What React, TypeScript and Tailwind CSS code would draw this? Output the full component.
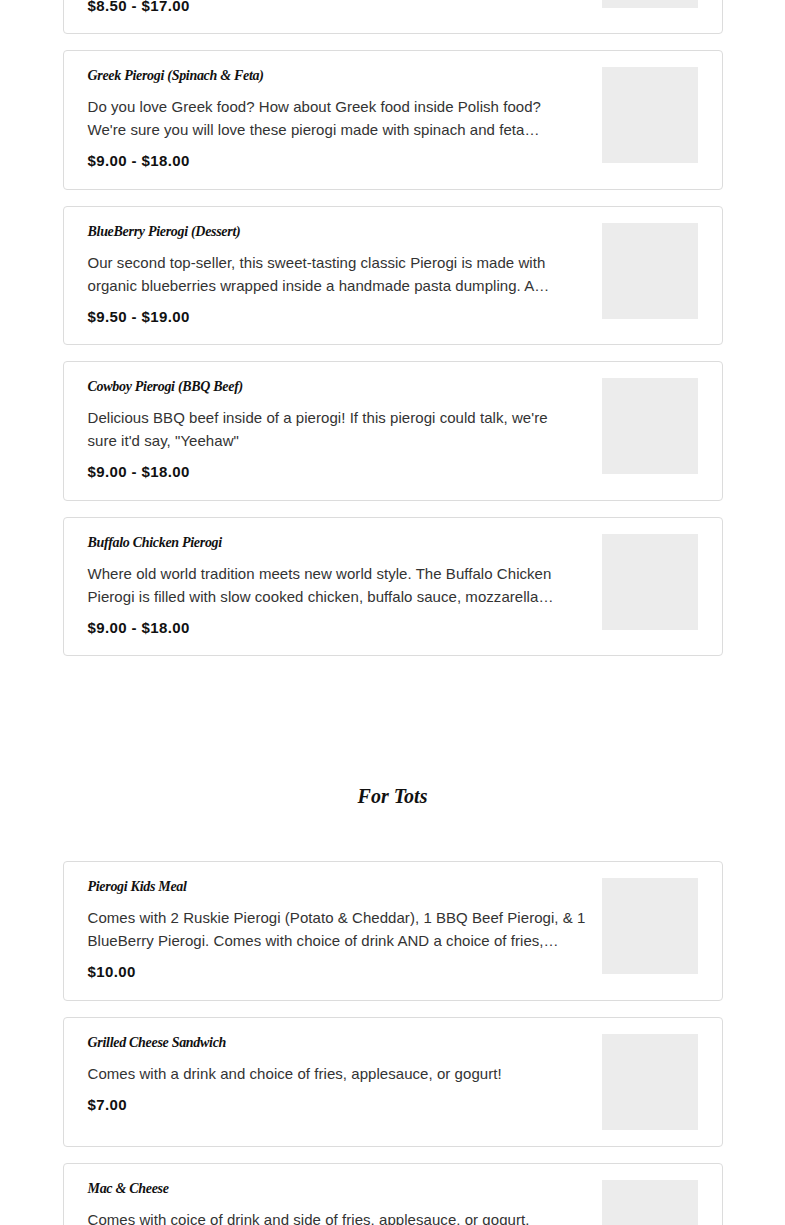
const items = [
  {
    name: "Ruskie Pierogi (Potato & Cheddar)",
    lines: [
      "Our number one seller! Creamy mashed potatoes and sharp cheddar",
      "cheese wrapped inside a handmade pasta dumpling, topped with…",
    ],
    price: "$8.50 - $17.00",
  },
  {
    name: "Greek Pierogi (Spinach & Feta)",
    lines: [
      "Do you love Greek food? How about Greek food inside Polish food?",
      "We're sure you will love these pierogi made with spinach and feta…",
    ],
    price: "$9.00 - $18.00",
  },
  {
    name: "BlueBerry Pierogi (Dessert)",
    lines: [
      "Our second top-seller, this sweet-tasting classic Pierogi is made with",
      "organic blueberries wrapped inside a handmade pasta dumpling. A…",
    ],
    price: "$9.50 - $19.00",
  },
  {
    name: "Cowboy Pierogi (BBQ Beef)",
    lines: [
      "Delicious BBQ beef inside of a pierogi! If this pierogi could talk, we're",
      'sure it\'d say, "Yeehaw"',
    ],
    price: "$9.00 - $18.00",
  },
  {
    name: "Buffalo Chicken Pierogi",
    lines: [
      "Where old world tradition meets new world style. The Buffalo Chicken",
      "Pierogi is filled with slow cooked chicken, buffalo sauce, mozzarella…",
    ],
    price: "$9.00 - $18.00",
  },
]

const tots = [
  {
    name: "Pierogi Kids Meal",
    lines: [
      "Comes with 2 Ruskie Pierogi (Potato & Cheddar), 1 BBQ Beef Pierogi, & 1",
      "BlueBerry Pierogi. Comes with choice of drink AND a choice of fries,…",
    ],
    price: "$10.00",
  },
  {
    name: "Grilled Cheese Sandwich",
    lines: ["Comes with a drink and choice of fries, applesauce, or gogurt!"],
    price: "$7.00",
  },
  {
    name: "Mac & Cheese",
    lines: ["Comes with coice of drink and side of fries, applesauce, or gogurt."],
    price: "$6.00",
  },
]

type Item = { name: string; lines: string[]; price: string }

const MenuCard = ({ item }: { item: Item }) => (
  <div className="flex gap-6 rounded-[4px] border border-[#dcdcdc] bg-white px-[24px] pt-[16px] pb-[16.5px]">
    <div className="flex-1 min-w-0">
      <h3 className="font-['Liberation_Serif',serif] italic font-bold text-[14px] leading-[18px] tracking-[-0.3px] text-[#111]">
        {item.name}
      </h3>
      <p className="mt-[10px] text-[15px] leading-[23px] tracking-[0.05px] text-[#333] font-['Liberation_Sans',sans-serif]">
        {item.lines.map((l) => (
          <span key={l} className="block whitespace-nowrap">
            {l}
          </span>
        ))}
      </p>
      <div className="mt-[9px] text-[15px] leading-[22px] tracking-[0.4px] font-bold text-[#111] font-['Liberation_Sans',sans-serif]">
        {item.price}
      </div>
    </div>
    <div className="w-[96px] h-[96px] shrink-0 bg-[#ececec]" />
  </div>
)

export default function App() {
  return (
    <div className="h-[1225px] bg-white overflow-hidden">
      <div className="mx-auto w-[660px] -mt-[105.5px]">
        <div className="flex flex-col gap-[16px]">
          {items.map((it) => (
            <MenuCard key={it.name} item={it} />
          ))}
        </div>
        <h2 className="mt-[125px] mb-[50px] text-center font-['Liberation_Serif',serif] italic font-bold text-[20px] leading-[30px] text-[#111]">
          For Tots
        </h2>
        <div className="flex flex-col gap-[16px]">
          {tots.map((it) => (
            <MenuCard key={it.name} item={it} />
          ))}
        </div>
      </div>
    </div>
  )
}
